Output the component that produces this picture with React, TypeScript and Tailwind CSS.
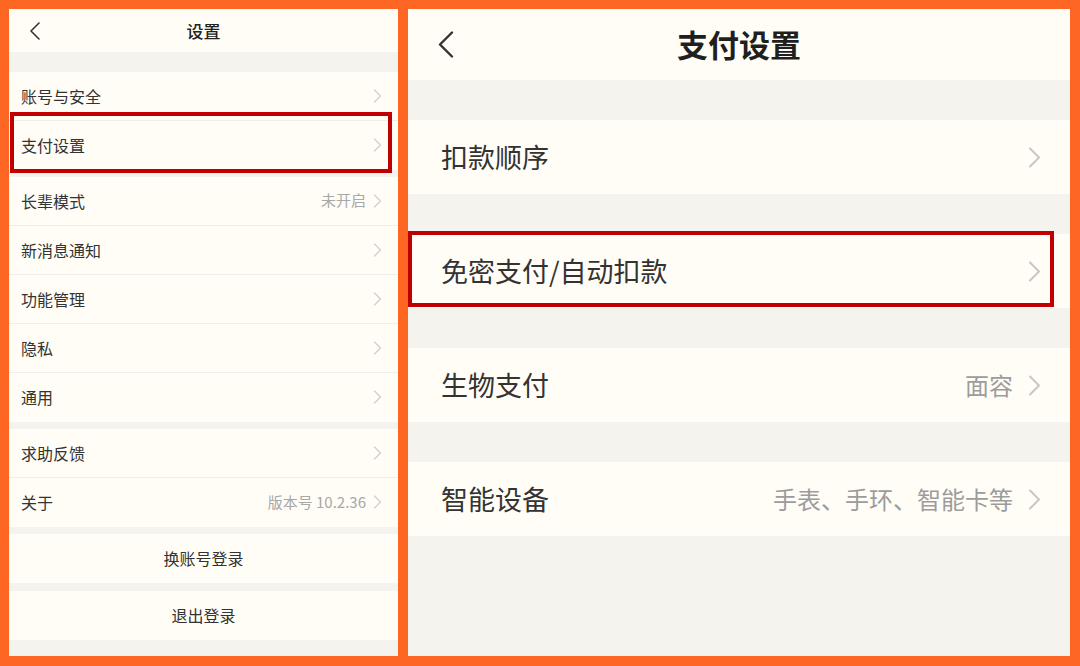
import React from 'react';

const FONT = { fontFamily: '"Noto Sans CJK SC", "Noto Sans", sans-serif' };

function SmallChevron() {
  return (
    <svg width="9" height="14" viewBox="0 0 9 14" fill="none" className="shrink-0">
      <polyline points="1.5,1 7.5,7 1.5,13" stroke="#cfcfcf" strokeWidth="1.3" strokeLinecap="round" strokeLinejoin="round" />
    </svg>
  );
}

function BigChevron() {
  return (
    <svg width="13" height="21" viewBox="0 0 13 21" fill="none" className="shrink-0">
      <polyline points="2,1.5 11,10.5 2,19.5" stroke="#c6c6c6" strokeWidth="2" strokeLinecap="round" strokeLinejoin="round" />
    </svg>
  );
}

type Row = { label: string; value?: string };

function LeftGroup({ rows }: { rows: Row[] }) {
  return (
    <div className="bg-[#fffdf6]">
      {rows.map((r, i) => (
        <div
          key={r.label}
          className={`h-[49px] flex items-center pl-[12px] pr-[16px] pb-[1px] ${i < rows.length - 1 ? 'border-b border-[#efeee8]' : ''}`}
        >
          <span className="text-[16px] text-[#333] flex-1">{r.label}</span>
          {r.value && <span className="text-[15px] text-[#a8a8a8] mr-[7px]">{r.value}</span>}
          <SmallChevron />
        </div>
      ))}
    </div>
  );
}

function LeftPanel() {
  return (
    <div className="relative w-[389px] h-[647px] bg-[#f4f3ee] flex flex-col overflow-hidden">
      <div className="h-[43px] bg-[#fffdf6] grid grid-cols-[1fr_auto_1fr] items-center">
        <div className="pl-[20px] flex items-center">
          <svg width="12" height="18" viewBox="0 0 12 18" fill="none">
            <polyline points="10,1 2,9 10,17" stroke="#333" strokeWidth="1.6" strokeLinecap="round" strokeLinejoin="round" />
          </svg>
        </div>
        <span className="text-[17px] font-medium text-[#222]">设置</span>
        <div />
      </div>
      <div className="h-[20px]" />
      <LeftGroup rows={[{ label: '账号与安全' }, { label: '支付设置' }]} />
      <div className="h-[7px]" />
      <LeftGroup
        rows={[
          { label: '长辈模式', value: '未开启' },
          { label: '新消息通知' },
          { label: '功能管理' },
          { label: '隐私' },
          { label: '通用' },
        ]}
      />
      <div className="h-[7px]" />
      <LeftGroup rows={[{ label: '求助反馈' }, { label: '关于', value: '版本号 10.2.36' }]} />
      <div className="h-[7px]" />
      <div className="h-[49px] bg-[#fffdf6] flex items-center justify-center pb-[1px] text-[16px] text-[#333]">换账号登录</div>
      <div className="h-[8px]" />
      <div className="h-[49px] bg-[#fffdf6] flex items-center justify-center pb-[1px] text-[16px] text-[#333]">退出登录</div>

      <div className="absolute left-[1px] top-[103px] w-[382px] h-[61px] border-[4px] border-[#c00000] pointer-events-none" />
    </div>
  );
}

function RightRow({ label, value }: Row) {
  return (
    <div className="h-[74px] bg-[#fffdf6] flex items-center pl-[33px] pr-[29px]">
      <span className="text-[27px] text-[#333] flex-1">{label}</span>
      {value && <span className="text-[24px] text-[#9c9c9c] mr-[15px]">{value}</span>}
      <BigChevron />
    </div>
  );
}

function RightPanel() {
  return (
    <div className="relative flex-1 h-[647px] bg-[#f4f3ee] flex flex-col overflow-hidden">
      <div className="h-[71px] bg-[#fffdf6] grid grid-cols-[1fr_auto_1fr] items-center">
        <div className="pl-[29px] flex items-center">
          <svg width="17" height="27" viewBox="0 0 17 27" fill="none">
            <polyline points="15,1.5 3,13.5 15,25.5" stroke="#333" strokeWidth="2.4" strokeLinecap="round" strokeLinejoin="round" />
          </svg>
        </div>
        <span className="text-[31px] font-semibold text-[#1f1f1f]">支付设置</span>
        <div />
      </div>
      <div className="h-[40px]" />
      <RightRow label="扣款顺序" />
      <div className="h-[40px]" />
      <RightRow label="免密支付/自动扣款" />
      <div className="h-[40px]" />
      <RightRow label="生物支付" value="面容" />
      <div className="h-[40px]" />
      <RightRow label="智能设备" value="手表、手环、智能卡等" />

      <div className="absolute left-0 top-[222px] w-[646px] h-[76px] border-[4px] border-[#c00000] pointer-events-none" />
    </div>
  );
}

export default function App() {
  return (
    <div
      className="w-[1080px] h-[666px] bg-[#fe6623] flex gap-[10px] pt-[9px] pl-[9px] pr-[10px] pb-[10px]"
      style={FONT}
    >
      <LeftPanel />
      <RightPanel />
    </div>
  );
}
